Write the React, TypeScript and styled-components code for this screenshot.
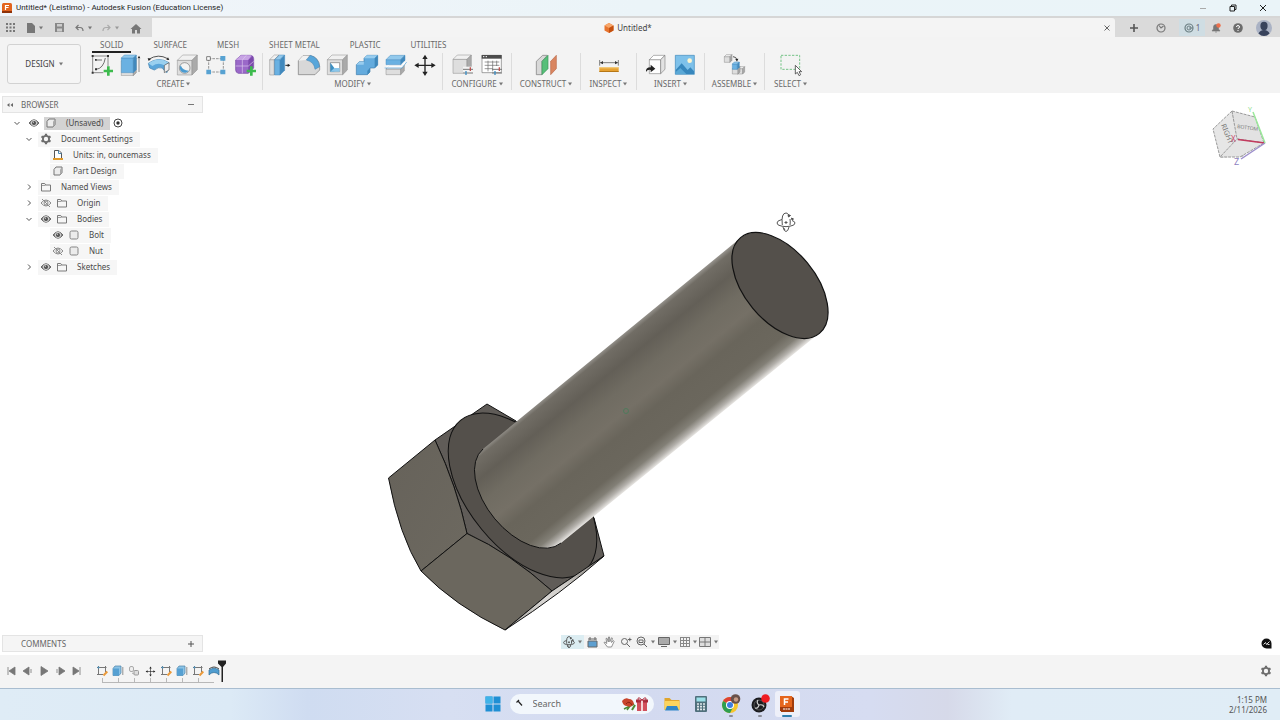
import React from "react";
import styled, { createGlobalStyle } from "styled-components";

const GlobalStyle = createGlobalStyle`
  * { box-sizing: border-box; }
  body { margin: 0; background: #fff; }
  button { font: inherit; color: inherit; background: none; border: 0; padding: 0; }
`;

/* ---------- layout parts ---------- */

const Shell = styled.div`
  display: flex;
  flex-direction: column;
  min-height: 100vh;
  font-family: "Noto Sans", sans-serif;
  font-size: 8px;
  line-height: 12px;
  color: #4a4a4a;
`;

const TitleBar = styled.header`
  display: flex;
  align-items: center;
  height: 16px;
  padding: 0 12px 0 2px;
  gap: 4px;
  background: linear-gradient(90deg, #f1f5fa, #ebf4f8 50%, #eaf4f8);
  color: #1d1d1d;
`;

const WindowTitle = styled.h1`
  margin: 0;
  flex: 1;
  font-family: Roboto, "Noto Sans", sans-serif;
  font-size: 8px;
  font-weight: 400;
`;

const WindowControls = styled.div`
  display: flex;
  gap: 20px;
`;

const IconButton = styled.button<{ $w?: number }>`
  display: flex;
  align-items: center;
  justify-content: center;
  flex: none;
  gap: 4px;
  width: ${(p) => p.$w ?? 16}px;
  min-height: 10px;
`;

const TabStrip = styled.div`
  display: flex;
  height: 21px;
  border-top: 2px solid #d6d6d6;
  background: #dadada;
`;

const QuickAccess = styled.div`
  display: flex;
  align-items: center;
  width: 152px;
  padding-left: 2px;
  color: #858585;
`;

const DocumentTab = styled.div`
  display: flex;
  flex: 1;
  align-items: center;
  padding-left: 5px;
  background: #f4f4f4;
  border-radius: 0 3px 0 0;
  color: #444;
`;

const DocumentName = styled.span`
  display: flex;
  flex: 1;
  align-items: center;
  justify-content: center;
  gap: 3px;
`;

const AccountBar = styled.div`
  display: flex;
  align-items: center;
  padding: 0 1px 0 10px;
  color: #777;
`;

const JobStatus = styled.button`
  display: flex;
  align-items: center;
  justify-content: center;
  gap: 2px;
  width: 26px;
  height: 17px;
  background: #cfdde3;
  color: #667;
`;

const Ribbon = styled.div`
  display: flex;
  height: 56px;
  background: #f3f3f3;
`;

const WorkspaceButton = styled.button`
  && {
    display: flex;
    align-items: center;
    justify-content: center;
    gap: 4px;
    width: 74px;
    height: 40px;
    margin: 7px 4px 0 7px;
    border: 1px solid #d2d2d2;
    border-radius: 3px;
    color: #444;
    background: #f5f5f5;
  }
`;

const RibbonBody = styled.div`
  display: flex;
  flex-direction: column;
`;

const RibbonTabs = styled.nav`
  display: flex;
  height: 16px;
  align-items: stretch;
`;

const RibbonTab = styled.button<{ $active?: boolean }>`
  position: relative;
  padding: 0 15px;
  color: #696969;
  &::after {
    content: "";
    display: ${(p) => (p.$active ? "block" : "none")};
    position: absolute;
    left: 7px;
    right: 7px;
    bottom: 0;
    height: 2px;
    background: #222;
  }
`;

const ToolGroups = styled.div`
  display: flex;
`;

const ToolGroup = styled.section<{ $w: number }>`
  display: flex;
  flex-direction: column;
  width: ${(p) => p.$w}px;
  padding: 0 3px;
  height: 37px;
  border-right: 1px solid #dcdcdc;
  &:last-child { border-right: 0; }
`;

const Tools = styled.div`
  display: flex;
  justify-content: center;
  height: 25px;
`;

const ToolButton = styled.button`
  display: flex;
  justify-content: center;
  align-items: flex-start;
  flex: 0 1 29px;
  padding-top: 1px;
  min-width: 0;
`;

const GroupLabel = styled.button`
  display: flex;
  align-items: center;
  justify-content: center;
  gap: 2px;
  height: 12px;
  color: #696969;
  white-space: nowrap;
`;

const Workspace = styled.main`
  position: relative;
  display: flex;
  flex: 1;
  flex-direction: column;
  justify-content: space-between;
  min-height: 400px;
  padding: 3px 2px;
  background: #fff;
`;

const ModelView = styled.svg`
  position: absolute;
  inset: 0;
  width: 100%;
  height: 100%;
`;

const CubeView = styled.svg`
  position: absolute;
  top: 7px;
  right: 8px;
`;

const SidePanel = styled.aside`
  position: relative;
  width: 201px;
`;

const PanelHeader = styled.div`
  display: flex;
  align-items: center;
  height: 17px;
  padding: 0 7px 0 3px;
  border: 1px solid #e4e4e4;
  background: #f5f5f5;
  color: #666;
`;

const PanelTitle = styled.h2`
  margin: 0 0 0 15px;
  flex: 1;
  font-size: 8px;
  font-weight: 400;
`;

const PanelTitleAfterIcon = styled(PanelTitle)`
  margin-left: 7px;
`;

const Tree = styled.ul`
  margin: 2px 0 0;
  padding: 0;
  list-style: none;
`;

const TreeRow = styled.li<{ $depth: number }>`
  display: flex;
  align-items: center;
  height: 16px;
  padding-left: ${(p) => 6 + p.$depth * 12}px;
`;

const Slot = styled.span<{ $w?: number }>`
  display: flex;
  align-items: center;
  justify-content: center;
  flex: none;
  width: ${(p) => p.$w ?? 16}px;
`;

const NodeBody = styled.span<{ $selected?: boolean }>`
  display: flex;
  align-items: center;
  height: ${(p) => (p.$selected ? 13 : 15)}px;
  padding-right: 7px;
  padding-left: ${(p) => (p.$selected ? 1 : 0)}px;
  margin-left: ${(p) => (p.$selected ? 2 : 0)}px;
  margin-right: 3px;
  background: ${(p) => (p.$selected ? "#d3d3d3" : "#f6f6f6")};
`;

const NodeName = styled.span<{ $root?: boolean }>`
  padding-left: ${(p) => (p.$root ? 9 : 7)}px;
  white-space: nowrap;
`;

const BottomRow = styled.div`
  position: relative;
  display: grid;
  grid-template-columns: 1fr auto 1fr;
  align-items: center;
`;

const NavBar = styled.div`
  position: relative;
  display: flex;
  align-self: start;
  align-items: center;
  height: 14px;
  background: #f3f3f3;
  color: #666;
`;

const NavItem = styled.button<{ $w: number; $active?: boolean }>`
  display: flex;
  align-items: center;
  justify-content: center;
  gap: 3px;
  width: ${(p) => p.$w}px;
  height: 14px;
  background: ${(p) => (p.$active ? "#dcedf2" : "transparent")};
`;

const CommentBubble = styled.button`
  justify-self: end;
  margin-right: 6px;
  display: flex;
`;

const Timeline = styled.footer`
  display: flex;
  align-items: center;
  height: 33px;
  padding: 0 6px 1px 3px;
  background: #f4f4f4;
  color: #777;
`;

const Features = styled.div`
  position: relative;
  display: flex;
  margin-left: 9px;
  padding-bottom: 6px;
  margin-top: 6px;
  &::after {
    content: "";
    position: absolute;
    left: 8px;
    right: 8px;
    bottom: 0;
    height: 4px;
    border-bottom: 1px solid #b8b8b8;
    background: repeating-linear-gradient(90deg, #b8b8b8 0 1px, transparent 1px 16px);
  }
`;

const Marker = styled.svg`
  position: absolute;
  right: -5px;
  top: -5px;
`;

const Spacer = styled.span`
  flex: 1;
`;

const Taskbar = styled.footer`
  display: grid;
  grid-template-columns: 1fr auto 1fr;
  align-items: center;
  height: 32px;
  border-top: 1px solid #a9bdd0;
  background: linear-gradient(90deg, #dfecf6, #dceaf6 18%, #cfdcf1 24%, #d7dff2 35%, #d3daf0 50%, #d6dcf1 68%, #d6d9e9 74%, #e0ecf6 79%, #e0edf6);
`;

const TaskApps = styled.div`
  grid-column: 2;
  display: flex;
  align-items: center;
  padding-bottom: 1px;
`;

const AppButton = styled.button<{ $w?: number; $active?: boolean; $running?: boolean }>`
  position: relative;
  display: flex;
  align-items: center;
  justify-content: center;
  width: ${(p) => p.$w ?? 29}px;
  height: 26px;
  border-radius: 3px;
  background: ${(p) => (p.$active ? "#eef0f9" : "transparent")};
  &::after {
    content: "";
    display: ${(p) => (p.$active || p.$running ? "block" : "none")};
    position: absolute;
    bottom: 0;
    width: ${(p) => (p.$active ? 10 : 4)}px;
    height: 2px;
    border-radius: 1px;
    background: ${(p) => (p.$active ? "#2f7fae" : "#8b8d97")};
  }
`;

const SearchBox = styled.label`
  display: flex;
  align-items: center;
  width: 144px;
  height: 20px;
  margin: 0 4px 0 5px;
  padding: 0 5px;
  border-radius: 10px;
  background: #f2f7fc;
`;

const SearchInput = styled.input`
  flex: 1;
  min-width: 0;
  margin-left: 8px;
  padding: 0;
  border: 0;
  outline: 0;
  background: transparent;
  font: 9px/14px "Noto Sans", sans-serif;
  color: #555;
  &::placeholder { color: #666; opacity: 1; }
`;

const Clock = styled.time`
  grid-column: 3;
  justify-self: end;
  margin-right: 13px;
  text-align: right;
  line-height: 10px;
  color: #555;
`;

/* ---------- drawings ---------- */

const Caret = ({ c = "#777" }: { c?: string }) => (
  <svg width="4" height="4" viewBox="0 0 4 4" aria-hidden>
    <path d="M0 0.6h4L2 3.4z" fill={c} />
  </svg>
);

/* Ribbon art is drawn on a 72 x 66 grid, three units to the pixel. */
const Art = ({ children }: { children: React.ReactNode }) => (
  <svg width="24" height="22" viewBox="0 0 72 66" fill="none" aria-hidden>
    {children}
  </svg>
);

type BoxProps = { x: number; y: number; w: number; h: number; d: number; f: string; t: string; s: string; o?: string };
const Block = ({ x, y, w, h, d, f, t, s, o = "#777" }: BoxProps) => (
  <g stroke={o} strokeWidth="1.5" strokeLinejoin="round">
    <path d={`M${x} ${y + d}h${w}v${h}h${-w}z`} fill={f} />
    <path d={`M${x} ${y + d}l${d} ${-d}h${w}l${-d} ${d}z`} fill={t} />
    <path d={`M${x + w} ${y + d}l${d} ${-d}v${h}l${-d} ${d}z`} fill={s} />
  </g>
);
const BLUE = { f: "#6ab1e2", t: "#92c9ec", s: "#4189bd", o: "#4a8fc0" };
const GREY = { f: "#dedede", t: "#f1f1f1", s: "#aaa", o: "#8a8a8a" };

const Plus = () => <path d="M55 37v28M41 51h28" stroke="#3dbb4d" strokeWidth="8" />;

const Sliders = () => (
  <g strokeWidth="3">
    <path d="M36 46h30M36 57h30" stroke="#777" />
    <path d="M58 40v11" stroke="#c0504d" strokeWidth="4" />
    <path d="M45 51v12" stroke="#3d8ec5" strokeWidth="4" />
  </g>
);

const SketchArt = () => (
  <Art>
    <path d="M10 6h42M8 8v46M10 56h30M54 8v28" stroke="#555" strokeWidth="2" />
    <path d="M18 18h18M18 46Q40 44 46 12" stroke="#555" strokeWidth="2.5" />
    <g fill="#333"><path d="M5 3h6v6H5zM51 3h6v6h-6zM5 53h6v6H5zM15 43h6v6h-6zM15 15h5v5h-5z" /></g>
    <Plus />
  </Art>
);
const ExtrudeArt = () => (
  <Art>
    <Block x={7} y={12} w={36} h={44} d={9} {...GREY} />
    <Block x={7} y={3} w={36} h={44} d={9} {...BLUE} />
    <path d="M60 54V14" stroke="#555" strokeWidth="2" /><path d="M56 13l4-8 4 8z" fill="#222" />
  </Art>
);
const RevolveArt = () => (
  <Art>
    <path d="M5 16Q34-2 62 14" stroke="#333" strokeWidth="2.5" /><path d="M2 12l3 9 7-6zM67 18l-9-1 5-7z" fill="#222" />
    <path d="M4 28Q34 6 66 26L60 56Q50 50 46 42Q34 38 22 48L8 42Z" fill="#5ba6da" stroke="#3f7fae" strokeWidth="2" />
    <path d="M4 28Q34 6 66 26L52 34Q34 24 16 36Z" fill="#9ad0ef" />
    <path d="M66 26v22l-14 8V34z" fill="#eee" stroke="#555" strokeWidth="2" />
  </Art>
);
const HoleArt = () => (
  <Art>
    <Block x={4} y={3} w={44} h={44} d={16} {...GREY} />
    <circle cx="26" cy="42" r="16" fill="#f3f3f3" stroke="#777" strokeWidth="2" />
    <path d="M14 34a14 14 0 1 0 24 16Q20 50 14 34z" fill="#4b9bd0" />
  </Art>
);
const PatternArt = () => (
  <Art>
    <path d="M14 14h44M14 14v40M14 54h44M58 14v40" stroke="#666" strokeWidth="2" strokeDasharray="8 3" />
    <path d="M8 8h11v11H8z" fill="#fff" stroke="#444" strokeWidth="2" />
    <path d="M49 6h15v14H49zM7 47h14v14H7zM49 47h15v14H49z" fill="#57a2d2" />
  </Art>
);
const FormArt = () => (
  <Art>
    <path d="M8 18L24 4h30q8 2 8 10v28L46 58H16Q8 56 8 48z" fill="#9a68c8" stroke="#6f3fa0" strokeWidth="2" />
    <path d="M8 18L24 4h32L46 18z" fill="#c7a3e4" /><path d="M46 18L60 6v36L46 58z" fill="#7c49ab" />
    <path d="M28 18v40M8 36h38l16-14M28 18L40 4" stroke="#dcc8ee" strokeWidth="2" /><Plus />
  </Art>
);
const PressPullArt = () => (
  <Art>
    <Block x={5} y={3} w={14} h={46} d={14} {...GREY} />
    <Block x={20} y={3} w={16} h={46} d={14} {...BLUE} />
    <path d="M52 34h8" stroke="#222" strokeWidth="3" /><path d="M59 29l8 5-8 5z" fill="#222" />
  </Art>
);
const FilletArt = () => (
  <Art>
    <path d="M4 20L18 5h22Q66 10 68 38v10L54 62H4z" fill="#d8d8d8" stroke="#777" strokeWidth="2" />
    <path d="M4 20L18 5h18L26 18z" fill="#f2f2f2" />
    <path d="M28 18L40 4Q64 10 68 38L54 46Q52 24 28 18z" fill="#58a6da" stroke="#3f7fae" strokeWidth="1.5" />
  </Art>
);
const ShellArt = () => (
  <Art>
    <Block x={4} y={3} w={46} h={45} d={14} {...GREY} />
    <path d="M13 26h28v27H13z" fill="#fff" stroke="#777" strokeWidth="2" /><path d="M13 26l12 16v11H13z" fill="#3c8fc2" /><path d="M25 42h16v11H13z" fill="#8ac6ea" />
  </Art>
);
const CombineArt = () => (
  <Art>
    <path d="M4 32l9-9h14V13l9-9h32v29l-9 9H45v12l-8 8H4z" fill="#64abdd" stroke="#3f7fae" strokeWidth="2" strokeLinejoin="round" />
    <path d="M4 32l9-9h14l-1 9zM27 13l9-9h32l-9 9z" fill="#98cdef" />
    <path d="M59 13l9-9v29l-9 9zM37 50l8-8v12l-8 8z" fill="#3f88bb" />
  </Art>
);
const SplitArt = () => (
  <Art>
    <Block x={6} y={34} w={44} h={17} d={11} {...GREY} />
    <path d="M2 42L20 24h50L54 42z" fill="#fff" opacity="0.8" />
    <Block x={6} y={4} w={44} h={15} d={13} {...BLUE} />
    <path d="M2 42h52L68 24" stroke="#4b9bd0" strokeWidth="2" />
  </Art>
);
const MovePath = () => (
  <>
    <path d="M36 12v44M12 34h48" stroke="#222" strokeWidth="4" />
    <path d="M36 2l8 13H28zM36 66l8-13H28zM4 34l13-8v16zM68 34l-13-8v16z" fill="#222" />
  </>
);
const MoveArt = () => <Art><MovePath /></Art>;
const ConfigureArt = () => (
  <Art><Block x={6} y={3} w={42} h={42} d={13} {...GREY} /><path d="M36 38h32v26H36z" fill="#f3f3f3" /><Sliders /></Art>
);
const ConfigTableArt = () => (
  <Art>
    <path d="M6 4h58v52H6z" fill="#fff" stroke="#777" strokeWidth="2" /><path d="M5 3h60v11H5z" fill="#4c4c4c" />
    <path d="M9 8h4M17 8h4" stroke="#fff" strokeWidth="3" />
    <path d="M14 24h44M14 34h44M14 44h24M24 20v32M38 20v32M50 20v16" stroke="#666" strokeWidth="2" /><Sliders />
  </Art>
);
const PlaneArt = () => (
  <Art>
    <path d="M7 22L26 4h14L24 22v40H7z" fill="#d8d8d8" stroke="#777" strokeWidth="2" />
    <path d="M24 22L42 4v40L24 62z" fill="#56bf79" stroke="#3a9458" strokeWidth="2" />
    <path d="M50 22L67 4v40L50 62z" fill="#d98560" stroke="#b9694a" strokeWidth="2" />
  </Art>
);
const MeasureArt = () => (
  <Art>
    <path d="M8 18v17M64 18v17M10 26h52" stroke="#444" strokeWidth="2" /><path d="M9 26l9-5v10zM63 26l-9-5v10z" fill="#333" />
    <path d="M7 40h58v13H7z" fill="#e6a132" /><path d="M7 40h58v3H7z" fill="#f4cd79" /><path d="M7 51h58v3H7z" fill="#b67716" />
  </Art>
);
const InsertArt = () => (
  <Art>
    <Block x={16} y={4} w={34} h={42} d={13} f="#fdfdfd" t="#fff" s="#e2e2e2" o="#666" />
    <path d="M6 54Q4 40 20 40v-8l14 12-14 11v-7Q10 46 6 54z" fill="#222" />
  </Art>
);
const ImageArt = () => (
  <Art>
    <path d="M7 4h57v57H7z" fill="#7ec1ea" stroke="#3b87b9" strokeWidth="2" /><circle cx="50" cy="20" r="7" fill="#fff6cf" />
    <path d="M8 48L26 28l18 20 8-8 11 12v8H8z" fill="#3787bd" /><path d="M8 54l14-12 18 18H8z" fill="#5aa8d6" />
  </Art>
);
const AssembleArt = () => (
  <Art>
    <Block x={4} y={2} w={17} h={17} d={6} {...GREY} />
    <path d="M30 8q10 0 12 10" stroke="#333" strokeWidth="2.5" /><path d="M37 15l5 8 4-9z" fill="#222" />
    <Block x={42} y={38} w={17} h={16} d={6} {...GREY} /><Block x={28} y={38} w={17} h={16} d={6} {...GREY} />
    <Block x={28} y={24} w={15} h={16} d={6} {...BLUE} />
  </Art>
);
const SelectArt = () => (
  <Art>
    <path d="M6 4h56v42H6z" stroke="#5dbb72" strokeWidth="2.5" strokeDasharray="7 4" />
    <path d="M49 34v26l6-5 5 10 5-3-5-9h8z" fill="#fff" stroke="#444" strokeWidth="2.5" />
  </Art>
);

const I = ({ w = 10, h = 10, children }: { w?: number; h?: number; children: React.ReactNode }) => (
  <svg width={w} height={h} viewBox={`0 0 ${w} ${h}`} fill="none" aria-hidden>{children}</svg>
);
const Eye = () => (
  <I w={12}><path d="M1 5Q6-1.5 11 5Q6 11.5 1 5z" fill="#8a8a8a" stroke="#6a6a6a" /><circle cx="6" cy="5" r="2.600" fill="#555" stroke="#eee" strokeWidth="0.800" /><circle cx="5.400" cy="4.200" r="0.600" fill="#ddd" /></I>
);
const EyeOff = () => (
  <I w={12}><path d="M1 5Q6-1 11 5Q6 11 1 5zM2 1l8 8" stroke="#8a8a8a" /><circle cx="6" cy="5" r="2" stroke="#8a8a8a" /></I>
);
const Chevron = ({ open }: { open?: boolean }) => (
  <I w={8} h={8}><path d={open ? "M1.5 3L4 5.5L6.5 3" : "M3 1.5L5.5 4L3 6.5"} stroke="#555" /></I>
);
const Folder = () => (
  <I w={12}><path d="M1.5 9V1.5h3.2l1 1.5h4.8v6z" stroke="#7a7a7a" /><path d="M1.5 3.5h4" stroke="#7a7a7a" strokeWidth="0.7" /></I>
);
const Part = () => (
  <I><path d="M1 9V3.4L3 1h6v5.6L7 9z" fill="#ececec" stroke="#757575" /><path d="M7 9V3.6L9 1.2V6.6z" fill="#aaa" /></I>
);
const Body = () => (
  <I><rect x="1" y="1" width="8" height="8" rx="1.5" fill="#ececec" stroke="#858585" /></I>
);
const Units = () => (
  <I w={12} h={12}><path d="M2.5 9V1.5h4.5l2.5 2.5v5" fill="#fff" stroke="#555" /><path d="M6.5 1.5v3h3" stroke="#4b87b0" /><path d="M1 9h10v2H1z" fill="#e09a2b" /></I>
);
const Gear = ({ c = "#6c6c6c" }: { c?: string }) => (
  <I w={12} h={12}>
    <circle cx="6" cy="6" r="3.1" stroke={c} strokeWidth="1.8" />
    <path d="M6 .8v1.600M6 9.6v1.600M1.500 3.400l1.400.8M9.100 7.800l1.400.8M1.500 8.600l1.400-.8M9.100 4.200l1.400-.8" stroke={c} strokeWidth="2.200" />
  </I>
);

const OrbitPaths = () => (
  <g stroke="#555" fill="none">
    <path d="M6 7.500Q1 8.500 1 11t5 3.200q4 .9 8 0 5-.7 5-3.200 0-1.500-3-2.500" />
    <path d="M9 16.500q-1.500 0 0 1.500M7 15q1 4.500 3 4.500t3-4.500M6.300 13Q5 1 10 1q1.500 0 2.500 1.500M14 13q.5-3 0-6" />
    <path d="M8.500 10.500h3M10 9v3" /><path d="M12 2.500l2.500 1-2 1.500zM15.500 6l2 1-1.500 1z" fill="#333" />
  </g>
);

const Bolt = () => (
  <ModelView viewBox="0 93 1280 562" preserveAspectRatio="xMidYMid meet" role="img" aria-label="Bolt model">
    <defs>
      <linearGradient id="shaft" gradientUnits="userSpaceOnUse" x1="630" y1="328" x2="708" y2="424">
        <stop offset="0" stopColor="#96938d" />
        <stop offset="0.04" stopColor="#716d65" />
        <stop offset="0.18" stopColor="#635f57" />
        <stop offset="0.34" stopColor="#706c62" />
        <stop offset="0.5" stopColor="#757066" />
        <stop offset="0.62" stopColor="#69655b" />
        <stop offset="0.83" stopColor="#6b675d" />
        <stop offset="0.91" stopColor="#827f76" />
        <stop offset="0.96" stopColor="#b3b0ab" />
        <stop offset="1" stopColor="#ebe9e6" />
      </linearGradient>
      <linearGradient id="leftFace" x1="0" y1="0" x2="1" y2="1">
        <stop offset="0" stopColor="#66625a" /><stop offset="1" stopColor="#6d6960" />
      </linearGradient>
      <linearGradient id="rightFace" x1="0" y1="1" x2="1" y2="0">
        <stop offset="0" stopColor="#a5a29d" /><stop offset="0.4" stopColor="#d9d7d4" /><stop offset="0.6" stopColor="#cfccc8" /><stop offset="1" stopColor="#75726c" />
      </linearGradient>
    </defs>
    <g stroke="#111" strokeWidth="1" strokeLinejoin="round">
      <path d="M435 440L487 404L516 421L594 518L604 556L552 591Q510 553 467 533.500Q457 487 435 440z" fill="#605c58" />
      <ellipse cx="522.500" cy="495.500" rx="97.500" ry="53" transform="rotate(50.500 522.500 495.500)" fill="#54504b" />
      <path d="M388.500 478L435 440Q457 487 467 533.500L421 571Q399 535 388.500 478z" fill="url(#leftFace)" />
      <path d="M467 533.500Q510 553 552 591L505 630Q455 606 421 571z" fill="#6b675e" />
      <path d="M552 591L604 556Q562 593 505 630z" fill="url(#rightFace)" />
    </g>
    <path d="M740.500 238L483 449A61 35.500 50.500 0 0 561 543L819.500 333z" fill="url(#shaft)" />
    <path d="M483 449A61 35.500 50.500 0 0 561 543" fill="none" stroke="#111" />
    <ellipse cx="780" cy="285.500" rx="62" ry="35.500" transform="rotate(50.500 780 285.500)" fill="#54504b" stroke="#111" strokeWidth="1.200" />
    <circle cx="626" cy="411" r="2.500" fill="none" stroke="#4f7a5c" />
    <g transform="translate(776 212)"><OrbitPaths /></g>
  </ModelView>
);

const ViewCube = () => (
  <CubeView width="64" height="72" viewBox="1208 100 64 72" role="img" aria-label="View cube">
    <g fill="#e6e6e6" stroke="#9a9a9a" strokeDasharray="3 1">
      <path d="M1232 111L1213 129L1220 157L1243 156z" />
      <path d="M1232 111L1255 117L1264 143L1237 139z" fill="#e2e2e2" />
      <path d="M1237 139L1264 143L1240 157L1220 157z" fill="#e4e4e4" />
    </g>
    <g fontFamily="Noto Sans, sans-serif" fill="#777">
      <text transform="translate(1221 125) rotate(68)" fontSize="7">RIGHT</text>
      <text transform="translate(1237 128) rotate(8)" fontSize="5">BOTTOM</text>
      <text x="1231" y="142" fontSize="8" fill="#c8486a">X</text>
      <text x="1234" y="165" fontSize="9" fill="#8d7fc0">Z</text>
      <text x="1248" y="112" fontSize="7" fill="#8fe08f">Y</text>
    </g>
    <path d="M1238 139.500L1265 143" stroke="#c33a5e" strokeWidth="1.500" />
    <path d="M1265 143L1241 159" stroke="#9d90cc" strokeWidth="1.500" />
    <path d="M1265 143L1253 112" stroke="#9be89b" strokeWidth="1.500" />
  </CubeView>
);

const MiniSketch = () => (
  <I w={12} h={12}><path d="M2.500 1v9M1 2.500h9.500M9.500 1v6M1 9.500h6" stroke="#777" /><path d="M11.300 6.500L7.500 10.500" stroke="#eb9a3a" strokeWidth="2" /><circle cx="2.500" cy="2.500" r="1" fill="#4a98c8" /></I>
);
const MiniExtrude = () => (
  <I w={12} h={12}><path d="M1 3.500L3 1h6v7L7 10.500H1z" fill="#8cc3e6" stroke="#4a83a8" strokeWidth="0.700" /><path d="M1 3.500h6v7H1z" fill="#56a0d2" /><path d="M10.800 2v8" stroke="#777" strokeWidth="0.800" /></I>
);
const MiniJoin = () => (
  <I w={12} h={12}><rect x="1.500" y="1.500" width="4" height="5" rx="1.500" fill="#eee" stroke="#aaa" /><rect x="6" y="5.500" width="4.500" height="4.500" rx="1" fill="#ddd" stroke="#999" /><path d="M4 8l2 1" stroke="#aaa" /></I>
);
const MiniMove = () => <svg width="11" height="11" viewBox="0 0 72 68" aria-hidden><MovePath /></svg>;
const MiniRevolve = () => (
  <I w={12} h={12}><path d="M1 4Q6 0 11 4" stroke="#444" /><path d="M1 5Q6 1.500 11 5v5Q9 7.500 6 7.500T1 10z" fill="#4f9dd0" stroke="#346e96" strokeWidth="0.700" /></I>
);

/* ---------- data ---------- */

const ribbonTabs = ["SOLID", "SURFACE", "MESH", "SHEET METAL", "PLASTIC", "UTILITIES"];

type ToolSpec = [string, React.FC];
const groups: { label: string; width: number; tools: ToolSpec[] }[] = [
  { label: "CREATE", width: 178, tools: [["Create Sketch", SketchArt], ["Extrude", ExtrudeArt], ["Revolve", RevolveArt], ["Hole", HoleArt], ["Pattern", PatternArt], ["Create Form", FormArt]] },
  { label: "MODIFY", width: 180, tools: [["Press Pull", PressPullArt], ["Fillet", FilletArt], ["Shell", ShellArt], ["Combine", CombineArt], ["Split Body", SplitArt], ["Move", MoveArt]] },
  { label: "CONFIGURE", width: 69, tools: [["Configure", ConfigureArt], ["Configuration Table", ConfigTableArt]] },
  { label: "CONSTRUCT", width: 69, tools: [["Offset Plane", PlaneArt]] },
  { label: "INSPECT", width: 56, tools: [["Measure", MeasureArt]] },
  { label: "INSERT", width: 68, tools: [["Insert Derive", InsertArt], ["Canvas", ImageArt]] },
  { label: "ASSEMBLE", width: 60, tools: [["New Component", AssembleArt]] },
  { label: "SELECT", width: 51, tools: [["Select", SelectArt]] },
];

type Node = { name: string; depth: number; open?: boolean; eye?: "on" | "off"; icon: React.ReactNode };
const nodes: Node[] = [
  { name: "Document Settings", depth: 1, open: true, icon: <Gear /> },
  { name: "Units: in, ouncemass", depth: 2, icon: <Units /> },
  { name: "Part Design", depth: 2, icon: <Part /> },
  { name: "Named Views", depth: 1, open: false, icon: <Folder /> },
  { name: "Origin", depth: 1, open: false, eye: "off", icon: <Folder /> },
  { name: "Bodies", depth: 1, open: true, eye: "on", icon: <Folder /> },
  { name: "Bolt", depth: 2, eye: "on", icon: <Body /> },
  { name: "Nut", depth: 2, eye: "off", icon: <Body /> },
  { name: "Sketches", depth: 1, open: false, eye: "on", icon: <Folder /> },
];

const playback: [string, string][] = [
  ["Go to start", "M2 1v8M9 1v8L3 5z"],
  ["Step back", "M7 1v8L1 5zM9 3v4"],
  ["Play", "M2 0.500v9L9 5z"],
  ["Step forward", "M3 1v8l6-4zM1 3v4"],
  ["Go to end", "M8 1v8M1 1v8l6-4z"],
];
const features: ToolSpec[] = [
  ["Sketch1", MiniSketch], ["Extrude1", MiniExtrude], ["Bodies1", MiniJoin], ["Move1", MiniMove],
  ["Sketch2", MiniSketch], ["Extrude2", MiniExtrude], ["Sketch3", MiniSketch], ["Revolve1", MiniRevolve],
];

/* ---------- page ---------- */

export default function App() {
  return (
    <Shell>
      <GlobalStyle />
      <TitleBar>
        <I w={10} h={12}><rect y="1" width="10" height="10" rx="1.500" fill="#e2631e" /><path d="M0 9h10v2H0z" fill="#8e3209" /><path d="M3.500 8V3.500H7M3.500 5.500h3" stroke="#fff" strokeWidth="1.200" /></I>
        <WindowTitle>Untitled* (Leistimo) - Autodesk Fusion (Education License)</WindowTitle>
        <WindowControls>
          <IconButton $w={10} aria-label="Minimize"><I w={8} h={8}><path d="M1 4.500h6" stroke="#aaa" /></I></IconButton>
          <IconButton $w={10} aria-label="Restore"><I w={8} h={8}><path d="M1 2.500h4.500V7H1zM2.500 2.500V1H7v4.500H5.500" stroke="#222" /></I></IconButton>
          <IconButton $w={10} aria-label="Close"><I w={8} h={8}><path d="M1 1l6 6M7 1L1 7" stroke="#222" /></I></IconButton>
        </WindowControls>
      </TitleBar>

      <TabStrip>
        <QuickAccess>
          <IconButton aria-label="Data panel"><I w={9} h={9}><path d="M0 1h9M0 4.500h9M0 8h9" stroke="#777" strokeWidth="2" strokeDasharray="2 1.500" /></I></IconButton>
          <IconButton $w={34} aria-label="File"><I w={8}><path d="M0 0h5l3 3v7H0z" fill="#777" /></I><Caret /></IconButton>
          <IconButton $w={14} aria-label="Save"><I w={9} h={9}><path d="M0 0h9v9H0z" fill="#888" /><path d="M2 1h5v2.500H2zM2 5.500h5v3H2z" fill="#ccc" /></I></IconButton>
          <IconButton $w={34} aria-label="Undo"><I w={9} h={8}><path d="M1 3.500h4Q8 3.500 8 7M3.500 1L1 3.500L3.500 6" stroke="#777" strokeWidth="1.200" /></I><Caret /></IconButton>
          <IconButton $w={20} aria-label="Redo"><I w={9} h={8}><path d="M8 3.500H4Q1 3.500 1 7M5.500 1L8 3.500L5.500 6" stroke="#aaa" strokeWidth="1.200" /></I><Caret c="#999" /></IconButton>
          <IconButton $w={32} aria-label="Home"><I w={12} h={12}><path d="M6 2L0.500 7H2v4.500h3V8h2v3.500h3V7h1.500z" fill="#777" /></I></IconButton>
        </QuickAccess>
        <DocumentTab>
          <DocumentName>
            <I><path d="M5 0l4.500 2.500v5L5 10L0.500 7.500v-5z" fill="#e7742f" /><path d="M5 0l4.500 2.500L5 5L0.500 2.500z" fill="#f7a76b" /><path d="M5 5l4.500-2.500v5L5 10z" fill="#c4500f" /></I>
            Untitled*
          </DocumentName>
          <IconButton aria-label="Close tab"><I w={8} h={8}><path d="M1.500 1.500l5 5M6.500 1.500l-5 5" stroke="#666" /></I></IconButton>
        </DocumentTab>
        <AccountBar>
          <IconButton $w={18} aria-label="New tab"><I><path d="M5 1v8M1 5h8" stroke="#555" strokeWidth="1.600" /></I></IconButton>
          <IconButton $w={36} aria-label="Extensions"><I><circle cx="5" cy="5" r="4" stroke="#777" strokeWidth="1.200" /><path d="M3 2.500L5 5l2.500-2" stroke="#777" strokeWidth="1.200" /></I></IconButton>
          <JobStatus><I><circle cx="5" cy="5" r="4" stroke="#6d8085" strokeWidth="1.200" /><circle cx="5" cy="5" r="2" stroke="#6d8085" /><path d="M5 5h4" stroke="#6d8085" /></I>1</JobStatus>
          <IconButton $w={22} aria-label="Notifications"><I><path d="M1 8h8L7.500 6V4Q7.500 1.500 5 1.500T2.500 4v2zM4 9h2" fill="#777" stroke="#777" strokeWidth="0.600" /><circle cx="7.500" cy="2.500" r="2.200" fill="#ee6f4b" /></I></IconButton>
          <IconButton $w={22} aria-label="Help"><I><circle cx="5" cy="5" r="4.800" fill="#6c6c6c" /><path d="M3.500 4Q3.500 2.500 5 2.500T6.500 4Q6.500 5 5 5.500V6M5 7v1" stroke="#fff" /></I></IconButton>
          <IconButton $w={30} aria-label="Account"><I w={16} h={16}><circle cx="8" cy="8" r="8" fill="#aab2c4" /><ellipse cx="8" cy="6" rx="3.600" ry="4.200" fill="#38435c" /><path d="M2.500 13.500Q4 10 8 10t5.500 3.500Q11 16 8 16t-5.500-2.500z" fill="#38435c" /></I></IconButton>
        </AccountBar>
      </TabStrip>

      <Ribbon>
        <WorkspaceButton>DESIGN <Caret /></WorkspaceButton>
        <RibbonBody>
          <RibbonTabs>
            {ribbonTabs.map((t, i) => <RibbonTab key={t} $active={i === 0}>{t}</RibbonTab>)}
          </RibbonTabs>
          <ToolGroups>
            {groups.map((g) => (
              <ToolGroup key={g.label} $w={g.width}>
                <Tools>
                  {g.tools.map(([name, Drawing]) => <ToolButton key={name} aria-label={name}><Drawing /></ToolButton>)}
                </Tools>
                <GroupLabel>{g.label}<Caret /></GroupLabel>
              </ToolGroup>
            ))}
          </ToolGroups>
        </RibbonBody>
      </Ribbon>

      <Workspace>
        <Bolt />
        <ViewCube />
        <SidePanel>
          <PanelHeader>
            <I w={8} h={6}><path d="M3.500 1v4L1 3zM7 1v4L4.500 3z" fill="#666" /></I>
            <PanelTitleAfterIcon>BROWSER</PanelTitleAfterIcon>
            <IconButton $w={8} aria-label="Collapse browser"><I w={6} h={6}><path d="M0 2.500h6" stroke="#777" /></I></IconButton>
          </PanelHeader>
          <Tree>
            <TreeRow $depth={0}>
              <Slot $w={18}><Chevron open /></Slot>
              <Slot><Eye /></Slot>
              <NodeBody $selected><Slot $w={12}><Part /></Slot><NodeName $root>(Unsaved)</NodeName></NodeBody>
              <I><circle cx="5" cy="5" r="4" stroke="#444" /><circle cx="5" cy="5" r="1.700" fill="#333" /></I>
            </TreeRow>
            {nodes.map((n) => (
              <TreeRow key={n.name} $depth={n.depth}>
                <Slot $w={18}>{n.open !== undefined && <Chevron open={n.open} />}</Slot>
                <NodeBody>
                  {n.eye && <Slot>{n.eye === "on" ? <Eye /> : <EyeOff />}</Slot>}
                  <Slot>{n.icon}</Slot>
                  <NodeName>{n.name}</NodeName>
                </NodeBody>
              </TreeRow>
            ))}
          </Tree>
        </SidePanel>

        <BottomRow>
          <SidePanel>
            <PanelHeader>
              <PanelTitle>COMMENTS</PanelTitle>
              <IconButton $w={8} aria-label="Add comment"><I w={6} h={6}><path d="M3 0v6M0 3h6" stroke="#555" /></I></IconButton>
            </PanelHeader>
          </SidePanel>
          <NavBar>
            <NavItem $w={23} $active aria-label="Orbit"><svg width="12" height="12" viewBox="0 0 20 20" strokeWidth="1.600" aria-hidden><OrbitPaths /></svg><Caret /></NavItem>
            <NavItem $w={16} aria-label="Look at"><I w={11} h={11}><path d="M1 4h9v6H1z" fill="#5d9fd0" stroke="#666" /><path d="M1 2h9M3 0v3M8 0v3" stroke="#666" /></I></NavItem>
            <NavItem $w={17} aria-label="Pan"><I w={12} h={12}><path d="M4.500 11L1 6.500l1-.5 1.800 1.500L3 2.500l1-.3L5.300 6 5.500 1h1l.3 4.800L8.500 1.800l.9.400L8.500 6.500l2-1.800.700.600L8.500 11z" stroke="#777" strokeWidth="0.800" fill="#fff" /></I></NavItem>
            <NavItem $w={17} aria-label="Zoom"><I w={12} h={12}><circle cx="4.500" cy="5.500" r="3" stroke="#666" /><path d="M6.700 7.700L10 11M8 3.500h3.500M9.800 1.800v3.400" stroke="#666" /></I></NavItem>
            <NavItem $w={23} aria-label="Fit"><I w={12} h={12}><circle cx="5" cy="5" r="4" stroke="#666" /><path d="M8 8l3 3M3 4h4v2.500H3z" stroke="#666" /></I><Caret /></NavItem>
            <NavItem $w={21} aria-label="Display settings"><I w={12} h={10}><path d="M0.500 0.500h11v7H0.500z" fill="#aaa" stroke="#666" /><path d="M3 9.500h6" stroke="#666" /></I><Caret /></NavItem>
            <NavItem $w={20} aria-label="Grid"><I><path d="M0 .5h10M0 3.500h10M0 6.500h10M0 9.500h10M.5 0v10M3.500 0v10M6.500 0v10M9.500 0v10" stroke="#888" /></I><Caret /></NavItem>
            <NavItem $w={21} aria-label="Viewports"><I w={12} h={10}><path d="M.5.5h11v9H.5zM6 0v10M0 5h12" fill="#ddd" stroke="#777" /></I><Caret /></NavItem>
          </NavBar>
          <CommentBubble aria-label="Comments"><I w={11} h={11}><path d="M5.500 0.500a5 5 0 1 0 0 10h5v-5a5 5 0 0 0-5-5z" fill="#111" /><path d="M2.500 6.500l2-2 1 2 3-3M6.500 6.500h2" stroke="#ddd" /></I></CommentBubble>
        </BottomRow>
      </Workspace>

      <Timeline>
        {playback.map(([name, d]) => (
          <IconButton key={name} $w={name === "Play" ? 18 : 16} aria-label={name}><I><path d={d} fill="#777" stroke="#777" strokeWidth="0.800" /></I></IconButton>
        ))}
        <Features>
          {features.map(([name, Drawing]) => <IconButton key={name} aria-label={name}><Drawing /></IconButton>)}
          <Marker width="10" height="22" viewBox="0 0 10 22" aria-hidden><path d="M1 0.500h8v3L6 7v15H4.500V7L1 3.500z" fill="#222" /></Marker>
        </Features>
        <Spacer />
        <IconButton $w={16} aria-label="Settings"><Gear /></IconButton>
      </Timeline>

      <Taskbar>
        <TaskApps>
          <AppButton $w={24} aria-label="Start"><I w={16} h={16}><path d="M0.500 0.500h7v7h-7zM8.500.5h7v7h-7zM.5 8.500h7v7h-7zM8.500 8.500h7v7h-7z" fill="#1f8fd4" /><path d="M.5.5h7v7h-7z" fill="#3fb3e8" /></I></AppButton>
          <SearchBox>
            <I w={10} h={12}><path d="M4 2L1.500 4.500M3 3l4 4.500" stroke="#222" strokeWidth="1.200" /></I>
            <SearchInput placeholder="Search" aria-label="Search" />
            <I w={28} h={16}>
              <path d="M3 13L13 8M6 14l3-4" stroke="#4c8a35" strokeWidth="1.500" />
              <path d="M1 5q3-4 7-2 4 0 5 5-3 4-7 2-4 0-5-5z" fill="#c8452c" /><path d="M5 8q3-4 6 1" stroke="#8c2513" />
              <path d="M14 9l-3 5" stroke="#4c8a35" strokeWidth="2" />
              <path d="M16 5h10v10H16z" fill="#d14f5b" /><path d="M15 3.500h12v3H15z" fill="#a52a3a" /><path d="M21 4v11" stroke="#f3d3d6" strokeWidth="2" /><path d="M21 4q-4-4-4-1t4 1q4-4 4-1t-4 1z" stroke="#b53445" />
            </I>
          </SearchBox>
          <AppButton $w={28} aria-label="File Explorer"><I w={16} h={16}><path d="M0.500 2h5l2 2h8v10h-15z" fill="#e0a52c" /><path d="M0.500 5h15v9h-15z" fill="#fbd45e" /><path d="M3 10h10l2 4.500H1z" fill="#2f86c8" /></I></AppButton>
          <AppButton $w={31} aria-label="Calculator"><I w={12} h={16}><rect width="12" height="16" rx="1" fill="#50707c" /><path d="M1.500 1.500h9v4h-9z" fill="#9ae0e8" /><path d="M2 8h8M2 10.700h8M2 13.400h8" stroke="#dfe7ea" strokeWidth="1.700" strokeDasharray="2 1" /></I></AppButton>
          <AppButton $running aria-label="Chrome">
            <I w={20} h={20}>
              <circle cx="9" cy="11" r="8" fill="#f7c52c" /><path d="M9 11L2.100 7A8 8 0 0 1 15.900 7z" fill="#dd4235" /><path d="M9 11L2.100 7A8 8 0 0 0 9 19l3-5.500z" fill="#2f9e4f" />
              <circle cx="9" cy="11" r="4" fill="#fff" /><circle cx="9" cy="11" r="3" fill="#3d7de0" /><circle cx="14.500" cy="5" r="4.800" fill="#68504a" /><circle cx="15" cy="5.500" r="2.200" fill="#c79b85" />
            </I>
          </AppButton>
          <AppButton $running aria-label="OBS Studio">
            <I w={20} h={20}>
              <circle cx="9" cy="11" r="7.500" fill="#1b1b1f" /><circle cx="9" cy="11" r="5" stroke="#555" /><path d="M9 11q-3-2-1-5M9 11q4-1 5 2M9 11q-1 4-4 3" stroke="#ccc" strokeWidth="1.200" />
              <circle cx="15.500" cy="4.500" r="4.300" fill="#ef1b22" />
            </I>
          </AppButton>
          <AppButton $w={25} $active aria-label="Autodesk Fusion">
            <I w={14} h={16}><path d="M1 0h10l3 2v14H1z" fill="#a23c0b" /><path d="M0 0h12v15H0z" fill="#e5661d" /><path d="M4.500 9V3H8.500M4.500 6H8" stroke="#fff" strokeWidth="1.500" /><path d="M0 11h12v4H0z" fill="#a03a0c" /><path d="M3 13h7" stroke="#fff" strokeDasharray="2 .5" /></I>
          </AppButton>
        </TaskApps>
        <Clock>1:15 PM<br />2/11/2026</Clock>
      </Taskbar>
    </Shell>
  );
}
